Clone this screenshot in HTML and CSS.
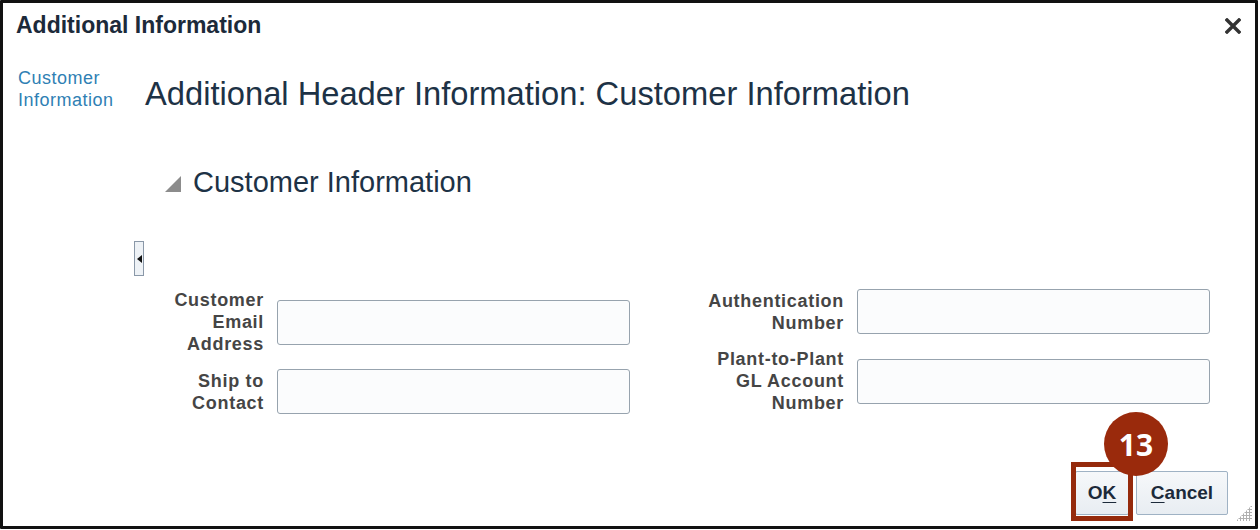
FILE: index.html
```html
<!DOCTYPE html>
<html lang="en">

<head>
    <meta charset="UTF-8">
    <meta name="viewport" content="width=device-width, initial-scale=1.0">
    <title>Additional Information</title>
    <link rel="stylesheet" href="styles.css">
</head>

<body>
    <div class="dialog">
        <div class="dialog-head">
            <h1 class="dialog-title">Additional Information</h1>
            <svg class="close" width="16" height="16" viewBox="0 0 16 16">
                <path d="M2 2 L14 14 M14 2 L2 14" stroke="#333" stroke-width="3.4" stroke-linecap="square" />
            </svg>
        </div>
        <div class="dialog-body">
            <div class="nav">
                <a class="nav-link" href="#">Customer<br>Information</a>
            </div>
            <div class="content">
                <h2 class="page-title">Additional Header Information: Customer Information</h2>
                <div class="section-head">
                    <i class="disclosure"></i>
                    <span class="section-title">Customer Information</span>
                </div>
                <span class="collapse-handle"><i></i></span>
                <div class="form">
                    <div class="col">
                        <div class="row">
                            <label class="label">Customer<br>Email<br>Address</label>
                            <input class="field" type="text">
                        </div>
                        <div class="row">
                            <label class="label">Ship to<br>Contact</label>
                            <input class="field" type="text">
                        </div>
                    </div>
                    <div class="col">
                        <div class="row">
                            <label class="label">Authentication<br>Number</label>
                            <input class="field" type="text">
                        </div>
                        <div class="row">
                            <label class="label">Plant-to-Plant<br>GL Account<br>Number</label>
                            <input class="field" type="text">
                        </div>
                    </div>
                </div>
            </div>
        </div>
        <div class="dialog-foot">
            <div class="ok-wrap">
                <button class="btn btn-ok">O<u>K</u></button>
                <span class="step">13</span>
            </div>
            <button class="btn btn-cancel"><u>C</u>ancel</button>
            <i class="grip"></i>
        </div>
    </div>
</body>

</html>
```

FILE: styles.css
```css
body {
    margin: 0;
    background: #fff;
    font-family: "Liberation Sans", Arial, sans-serif;
}

.dialog {
    width: 1252px;
    height: 523px;
    border: 3px solid #111;
    border-radius: 1px;
    display: flex;
    flex-direction: column;
    position: relative;
    background: #fff;
}

/* 标题栏 */
.dialog-head {
    display: flex;
    align-items: center;
    justify-content: space-between;
    height: 44px;
    padding: 0 14px 0 13px;
}

.dialog-title {
    margin: 0;
    font-size: 23px;
    font-weight: bold;
    color: #1c2a3a;
}

.close {
    margin-top: 2px;
}

.dialog-body {
    flex: 1;
    display: flex;
}

/* 左侧导航 */
.nav {
    width: 106px;
    padding: 20px 0 0 15px;
}

.nav-link {
    font-size: 18px;
    line-height: 22px;
    letter-spacing: 0.5px;
    color: #2f7fb4;
    text-decoration: none;
}

.content {
    flex: 1;
}

.page-title {
    margin: 28px 0 0 21px;
    font-size: 32.7px;
    font-weight: normal;
    line-height: 38px;
    color: #1d3246;
}

.section-head {
    display: flex;
    align-items: center;
    gap: 12px;
    margin: 51px 0 0 41px;
    height: 36px;
}

.disclosure {
    width: 0;
    height: 0;
    border-left: 16px solid transparent;
    border-bottom: 16px solid #8c8c8c;
    margin-top: 3px;
}

.section-title {
    font-size: 29px;
    color: #1d3246;
}

.collapse-handle {
    display: flex;
    align-items: center;
    justify-content: center;
    width: 8px;
    height: 33px;
    margin: 41px 0 0 10px;
    border: 1px solid #8a98a8;
    background: #eef2f6;
}

.collapse-handle i {
    width: 0;
    height: 0;
    border-top: 4px solid transparent;
    border-bottom: 4px solid transparent;
    border-right: 5px solid #111;
}

/* 表单 */
.form {
    display: flex;
    gap: 74px;
    margin-top: 6px;
}

.col {
    display: flex;
    flex-direction: column;
}

.row {
    display: flex;
    align-items: center;
    gap: 13px;
    padding: 7px 0;
}

.label {
    width: 140px;
    text-align: right;
    font-size: 18px;
    font-weight: bold;
    line-height: 22px;
    letter-spacing: 0.7px;
    color: #454545;
}

.field {
    box-sizing: border-box;
    width: 353px;
    height: 45px;
    border: 1px solid #97a3ae;
    border-radius: 3px;
    background: #fbfcfd;
    outline: none;
}

/* 底部按钮 */
.dialog-foot {
    display: flex;
    justify-content: flex-end;
    align-items: flex-end;
    gap: 7px;
    padding: 0 27px 11px 0;
}

.ok-wrap {
    position: relative;
    display: flex;
}

/* 红色标注框 */
.ok-wrap::after {
    content: "";
    position: absolute;
    left: -4px;
    right: -4px;
    top: -9px;
    bottom: -6px;
    border: 5px solid #952a0c;
}

.btn {
    height: 44px;
    border: 1px solid #9fb2c4;
    border-radius: 2px;
    background: linear-gradient(#f6f8fa, #e8edf2);
    font-family: "Liberation Sans", Arial, sans-serif;
    font-size: 19px;
    font-weight: bold;
    color: #1c2a3a;
    padding: 0;
}

.btn u {
    text-underline-offset: 3px;
}

.btn-ok {
    width: 54px;
}

.btn-cancel {
    width: 92px;
}

/* 步骤标记 */
.step {
    position: absolute;
    left: 29px;
    top: -59px;
    width: 64px;
    height: 64px;
    border-radius: 50%;
    background: #9a2a0c;
    color: #fff;
    font-family: "Open Sans", "Liberation Sans", sans-serif;
    font-size: 30px;
    font-weight: bold;
    display: flex;
    align-items: center;
    justify-content: center;
    z-index: 1;
}

.grip {
    position: absolute;
    right: 3px;
    bottom: 5px;
    width: 16px;
    height: 16px;
    background: radial-gradient(circle, #b0b0b0 1px, transparent 1.2px) 0 0 / 3px 3px;
    clip-path: polygon(100% 0, 100% 100%, 0 100%);
}
```
